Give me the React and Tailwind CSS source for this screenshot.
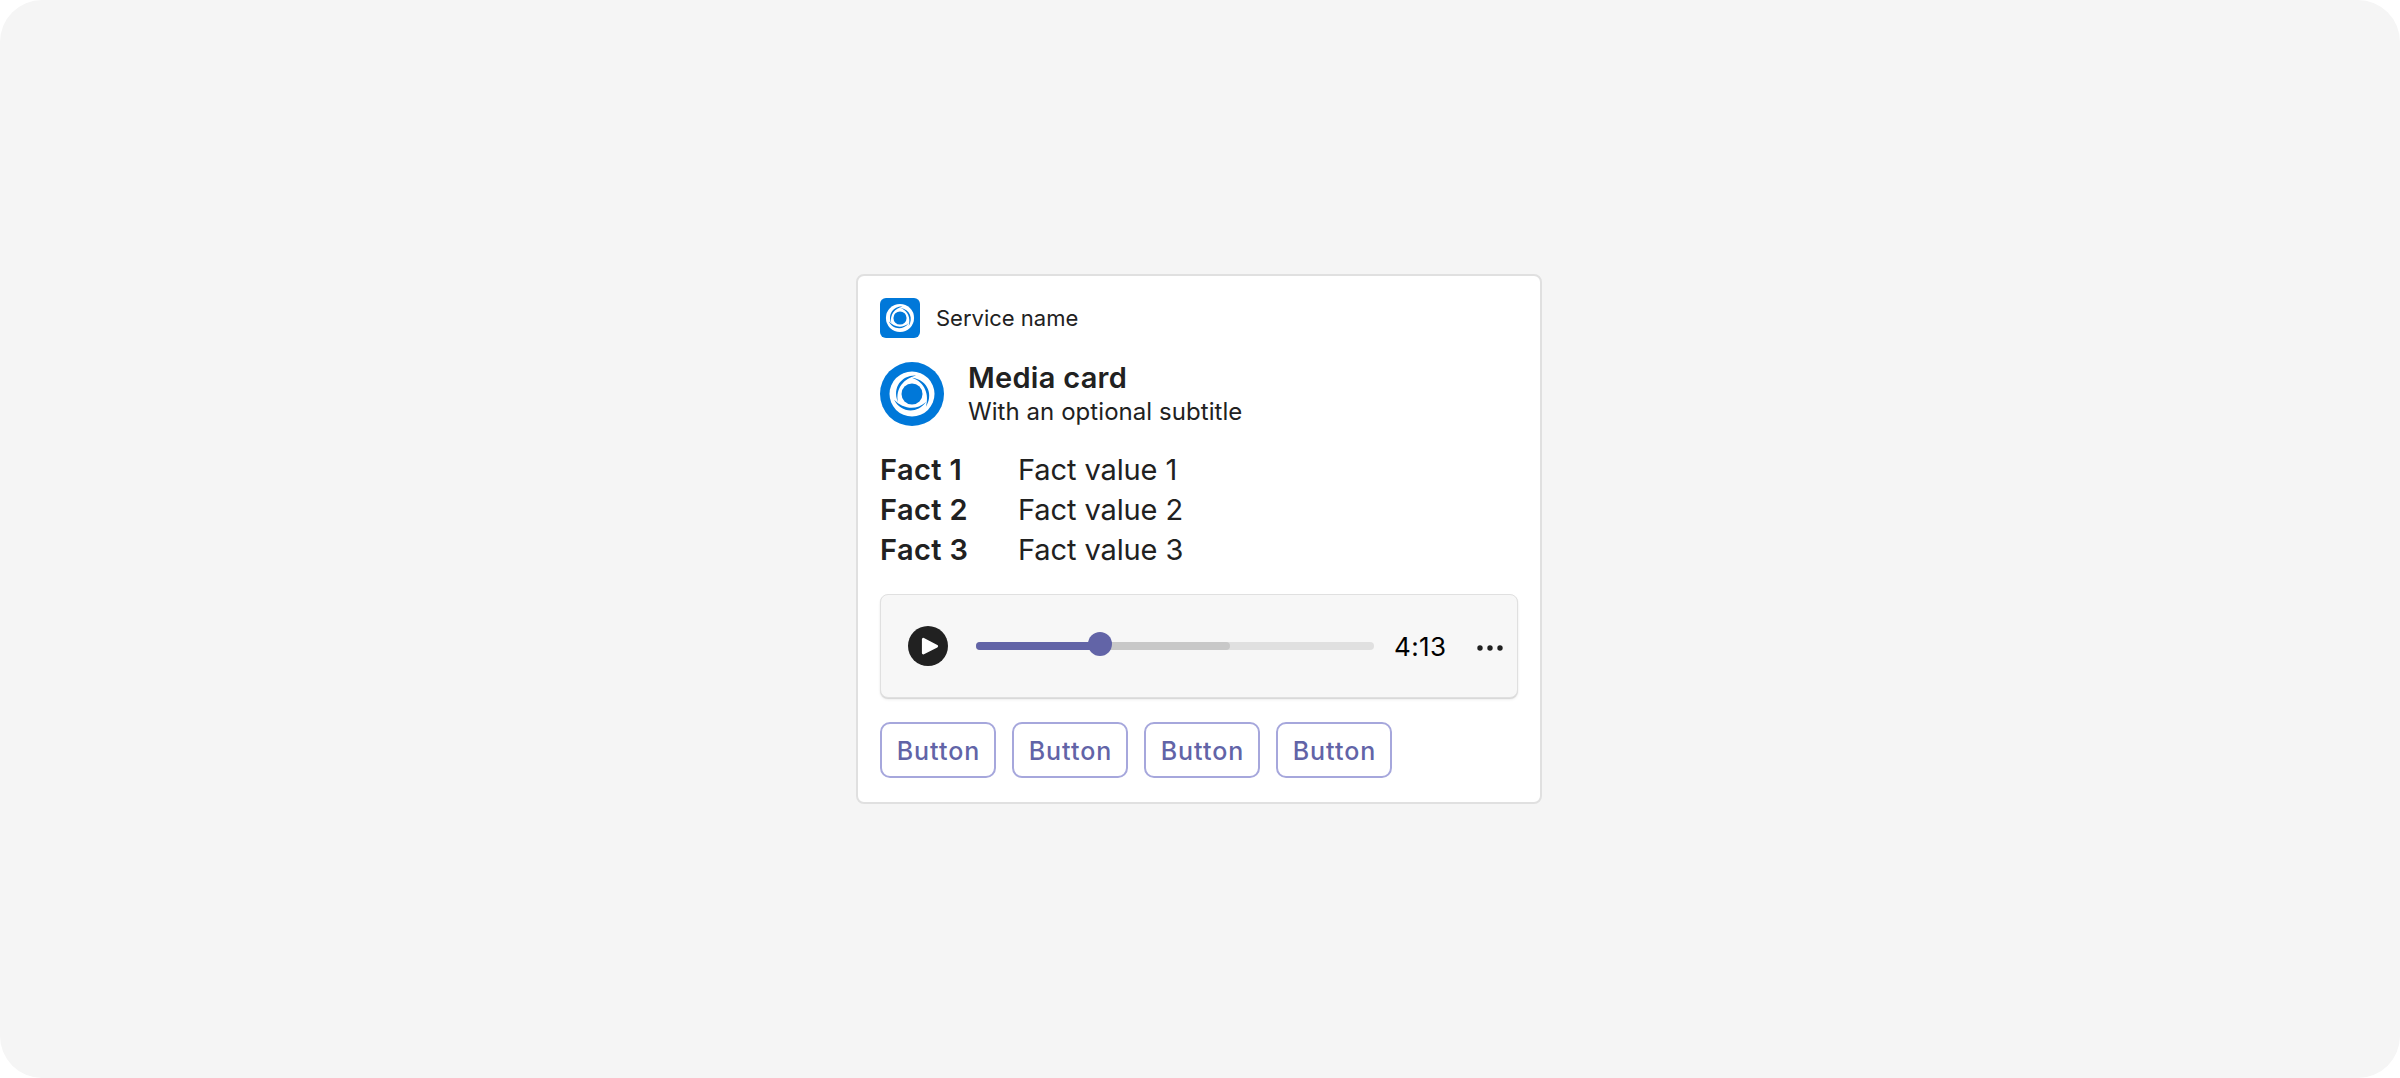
import React from "react";

function Swirl({ className }) {
  return (
    <svg viewBox="-32 -32 64 64" className={className} aria-hidden="true">
      <circle r="22.5" fill="#fff" />
      <circle r="10.5" fill="#0078d9" />
      {[0, 120, 240].map((angle) => (
        <path
          key={angle}
          transform={`rotate(${angle})`}
          d="M4 -18.4C-9 -19.2 -20.5 -7.5 -14 8.2C-16.8 -5.5 -8 -15.4 4 -18.4Z"
          fill="#0078d9"
        />
      ))}
    </svg>
  );
}

const facts = [
  ["Fact 1", "Fact value 1"],
  ["Fact 2", "Fact value 2"],
  ["Fact 3", "Fact value 3"],
];

const buttons = ["Button", "Button", "Button", "Button"];

export default function App() {
  return (
    <div className="h-[1078px] w-[2400px] bg-white font-['Inter',sans-serif]">
      <main className="flex h-full w-full justify-center rounded-[42px] bg-[#f5f5f5] pt-[274px] pr-[2px] text-[#212121]">
        <section className="h-[530px] w-[686px] rounded-lg border-2 border-[#e0e0e0] bg-white p-[22px]">
          <header className="flex h-10 items-center gap-4">
            <div className="h-10 w-10 rounded-[6px] bg-[#0078d9]">
              <Swirl className="h-10 w-10" />
            </div>
            <span className="text-[22px] leading-[40px]">Service name</span>
          </header>

          <div className="mt-6 flex h-16 gap-6">
            <div className="h-16 w-16 rounded-full bg-[#0078d9]">
              <Swirl className="h-16 w-16" />
            </div>
            <div className="flex flex-col">
              <h1 className="text-[29px] leading-[32px] font-semibold tracking-[0.28px]">Media card</h1>
              <p className="text-[24px] leading-[35px] tracking-[0.06px]">With an optional subtitle</p>
            </div>
          </div>

          <dl className="mt-6 text-[29px] leading-[40px]">
            {facts.map(([name, value]) => (
              <div key={name} className="flex h-10">
                <dt className="w-[138px] font-semibold tracking-[0.4px]">{name}</dt>
                <dd className="tracking-[-0.1px]">{value}</dd>
              </div>
            ))}
          </dl>

          <div className="mt-6 flex h-[104px] items-center rounded-lg border border-[#e0e0e0] bg-[#f7f7f7] pl-[27px] shadow-[0_1px_1px_rgba(0,0,0,0.12),0_2px_3px_rgba(0,0,0,0.06)]">
            <svg viewBox="0 0 40 40" className="h-10 w-10" aria-label="Play">
              <circle cx="20" cy="20" r="20" fill="#212121" />
              <path
                d="M15.3 13.3v13.8l13.4-6.9z"
                fill="#fff"
                stroke="#fff"
                strokeWidth="2.8"
                strokeLinejoin="round"
              />
            </svg>
            <div className="relative ml-7 h-2 w-[398px] rounded-full bg-[#e0e0e0]">
              <div className="h-2 w-[254px] rounded-full bg-[#c8c8c8]">
                <div className="h-2 w-[124px] rounded-full bg-[#6264a7]" />
              </div>
              <div className="absolute top-[-10px] left-[112px] h-6 w-6 rounded-full bg-[#6264a7]" />
            </div>
            <span className="ml-5 w-[52px] pt-[2px] text-[26px] leading-[32px] tracking-[0.4px] text-black">4:13</span>
            <svg viewBox="0 0 32 32" className="ml-7 h-8 w-8" fill="#212121" aria-label="More">
              <circle cx="16" cy="18" r="2.7" />
              <circle cx="26" cy="18" r="2.7" />
              <circle cx="6" cy="18" r="2.7" />
            </svg>
          </div>

          <div className="mt-6 flex gap-4">
            {buttons.map((label, i) => (
              <button
                key={i}
                className="h-14 w-[116px] rounded-[10px] border-2 border-[#a6a7dc] pt-[2px] pl-px text-[25px] leading-[50px] font-medium tracking-[1px] text-[#6264a7]"
              >
                {label}
              </button>
            ))}
          </div>
        </section>
      </main>
    </div>
  );
}
